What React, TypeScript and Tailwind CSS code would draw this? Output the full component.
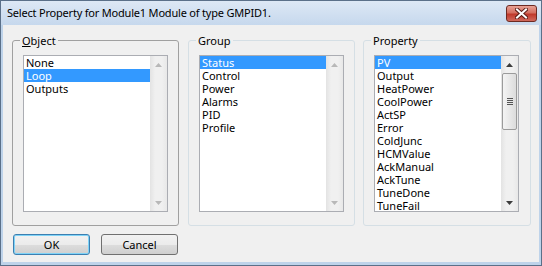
const objects = ['None', 'Loop', 'Outputs']
const groups = ['Status', 'Control', 'Power', 'Alarms', 'PID', 'Profile']
const properties = [
  'PV', 'Output', 'HeatPower', 'CoolPower', 'ActSP', 'Error',
  'ColdJunc', 'HCMValue', 'AckManual', 'AckTune', 'TuneDone', 'TuneFail',
]

function Arrow({ up, dark }: { up?: boolean; dark?: boolean }) {
  return (
    <svg width="7" height="4" viewBox="0 0 7 4">
      <polygon
        points={up ? '3.5,0 7,4 0,4' : '0,0 7,0 3.5,4'}
        fill={dark ? '#3c3c3c' : '#b8b8b8'}
      />
    </svg>
  )
}

function ScrollBar({ enabled }: { enabled?: boolean }) {
  return (
    <div className="w-[17px] flex flex-col bg-[linear-gradient(90deg,#e3e3e3,#f0f0f0_30%,#f0f0f0_70%,#e8e8e8)]">
      <div className="h-[17px] flex items-center justify-center">
        <Arrow up dark={enabled} />
      </div>
      <div className="flex-1 flex flex-col">
        {enabled && (
          <div className="h-[57px] mx-[1px] rounded-[2px] border border-[#9b9b9b] bg-linear-to-r from-[#f4f4f4] to-[#dcdcdc] flex flex-col items-center justify-center gap-[1px]">
            <div className="w-[6px] h-[1px] bg-[#555]" />
            <div className="w-[6px] h-[1px] bg-[#555]" />
            <div className="w-[6px] h-[1px] bg-[#555]" />
            <div className="w-[6px] h-[1px] bg-[#555]" />
          </div>
        )}
      </div>
      <div className="h-[17px] flex items-center justify-center">
        <Arrow dark={enabled} />
      </div>
    </div>
  )
}

function ListBox({ items, selected, scroll }: { items: string[]; selected: string; scroll?: boolean }) {
  return (
    <div className="w-[145px] h-[157px] border border-[#abadb3] bg-white flex">
      <div className="flex-1 flex flex-col overflow-hidden">
        {items.map(item => (
          <div
            key={item}
            className={`h-[13px] shrink-0 leading-[13px] pl-[2px] whitespace-nowrap ${
              item === selected ? 'bg-[#3399ff] text-white' : ''
            }`}
          >
            {item}
          </div>
        ))}
      </div>
      <ScrollBar enabled={scroll} />
    </div>
  )
}

function GroupBox({ label, width, dark, children }: {
  label: React.ReactNode
  width: string
  dark?: boolean
  children: React.ReactNode
}) {
  return (
    <div
      className={`relative ${width} h-[186px] rounded-[3px] border pt-[14px] pl-[10px] ${
        dark ? 'border-[#a0a0a0]' : 'border-[#d5dfe5]'
      }`}
    >
      <span className="absolute -top-[8px] left-[7px] px-[2px] leading-[15px] bg-[#f0f0f0]">
        {label}
      </span>
      {children}
    </div>
  )
}

function Button({ children, focused }: { children: React.ReactNode; focused?: boolean }) {
  return (
    <button
      className={`w-[77px] h-[21px] rounded-[3px] border leading-[19px] text-center bg-[linear-gradient(#f2f2f2_0%,#ebebeb_50%,#dddddd_50%,#cfcfcf_100%)] ${
        focused ? 'border-[#3c7fb1] shadow-[inset_0_0_0_1px_#7fd3f7]' : 'border-[#707070]'
      }`}
    >
      {children}
    </button>
  )
}

export default function App() {
  return (
    <div className="w-[542px] h-[266px] border border-[#5b7089] bg-[#bed3ea] flex flex-col text-[11px] text-black font-['Noto_Sans','DejaVu_Sans',sans-serif]">
      {/* Title bar */}
      <div className="h-[24px] flex items-start justify-between pl-[6px] pr-[4px] bg-linear-to-b from-[#dde8f5] to-[#c6d8ed]">
        <span className="text-[11px] leading-[24px] tracking-[-0.2px]">Select Property for Module1 Module of type GMPID1.</span>
        <div className="mt-[4px] w-[31px] h-[17px] rounded-[3px] border border-[#6d2a22] bg-[linear-gradient(#e8a195_0%,#d46f60_45%,#c0392b_55%,#d0695c_100%)] flex items-center justify-center">
          <svg width="13" height="11" viewBox="0 0 13 11">
            <path d="M2 1.5 L11 9.5 M11 1.5 L2 9.5" stroke="#5a1d16" strokeWidth="4" strokeLinecap="square" />
            <path d="M2 1.5 L11 9.5 M11 1.5 L2 9.5" stroke="#ffffff" strokeWidth="2" strokeLinecap="square" />
          </svg>
        </div>
      </div>

      {/* Body */}
      <div className="flex-1 mx-[2px] mb-[3px] bg-[#f0f0f0] pt-[15px] pl-[9px] flex flex-col">
        <div className="flex">
          <GroupBox width="w-[167px]" dark label={<><span className="underline underline-offset-1">O</span>bject</>}>
            <ListBox items={objects} selected="Loop" />
          </GroupBox>
          <div className="w-[9px]" />
          <GroupBox width="w-[167px]" label="Group">
            <ListBox items={groups} selected="Status" />
          </GroupBox>
          <div className="w-[8px]" />
          <GroupBox width="w-[168px]" label="Property">
            <ListBox items={properties} selected="PV" scroll />
          </GroupBox>
        </div>
        <div className="flex gap-[11px] mt-[8px] ml-[1px]">
          <Button focused>OK</Button>
          <Button>Cancel</Button>
        </div>
      </div>
    </div>
  )
}
